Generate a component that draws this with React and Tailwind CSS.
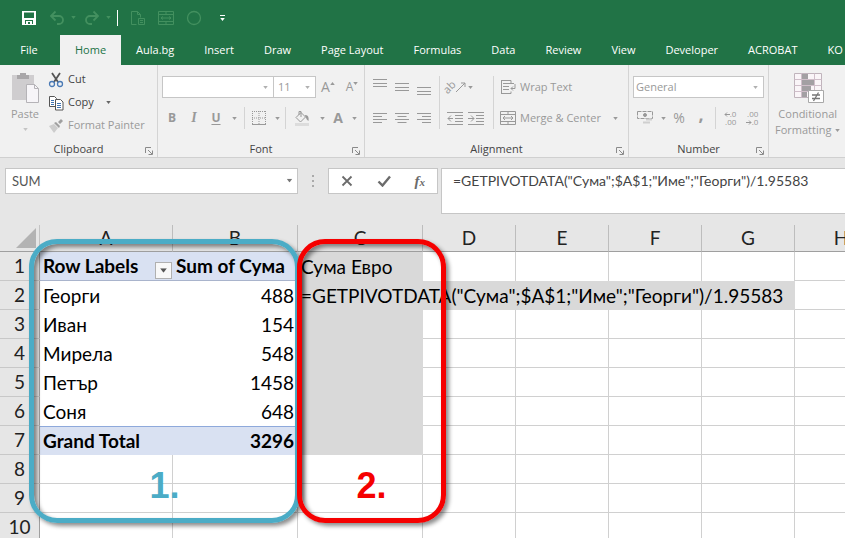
import { useState } from "react";

const TABS = [
  "Home",
  "Aula.bg",
  "Insert",
  "Draw",
  "Page Layout",
  "Formulas",
  "Data",
  "Review",
  "View",
  "Developer",
  "ACROBAT",
  "KO",
];

const COLUMNS = ["A", "B", "C", "D", "E", "F", "G", "H"];

const PIVOT_ROWS = [
  { name: "Георги", total: 488 },
  { name: "Иван", total: 154 },
  { name: "Мирела", total: 548 },
  { name: "Петър", total: 1458 },
  { name: "Соня", total: 648 },
];

const FORMULA = '=GETPIVOTDATA("Сума";$A$1;"Име";"Георги")/1.95583';

const Caret = ({ className = "" }) => (
  <svg
    viewBox="0 0 6 4"
    aria-hidden="true"
    className={`h-[3px] w-[5px] shrink-0 ${className}`}
  >
    <path d="M0 0h6L3 4z" fill="currentColor" />
  </svg>
);

const Icon = ({ size = "h-4 w-4", box = "0 0 16 16", children }) => (
  <svg
    viewBox={box}
    aria-hidden="true"
    fill="none"
    stroke="currentColor"
    className={`${size} shrink-0`}
  >
    {children}
  </svg>
);

const ToolButton = ({ label, className = "w-5", children }) => (
  <button
    type="button"
    aria-label={label}
    className={`flex h-[22px] items-center justify-center ${className}`}
  >
    {children}
  </button>
);

const Divider = () => <span className="mx-0.5 h-[22px] w-px bg-[#d4d4d4]" />;

const Group = ({ title, className = "", children }) => (
  <section
    aria-label={title}
    className={`relative flex shrink-0 flex-col justify-between border-r border-[#d4d4d4] ${className}`}
  >
    {children}
    <div className="text-center leading-4 text-[#444]">{title}</div>
    <button
      type="button"
      aria-label={`${title} settings`}
      className="absolute right-1 bottom-0.5 text-[#8a8a8a]"
    >
      <Icon size="h-2 w-2" box="0 0 8 8">
        <path d="M.5 6V.5H6M3 3l4 4M7.500 3.500v4h-4" />
      </Icon>
    </button>
  </section>
);

// Horizontal strokes used by the alignment buttons
const Lines = ({ d }) => (
  <Icon>
    <path d={d} />
  </Icon>
);

const TitleBar = () => (
  <div className="flex h-[35px] items-center pl-[21px] text-[#43905f]">
    <button type="button" aria-label="Save" className="text-white">
      <Icon size="h-4 w-4">
        <path d="M1 1h14v14H1z" fill="currentColor" stroke="none" />
        <path d="M3 2.500h10V8H3zM4 10h8v4H4z" fill="#217346" stroke="none" />
        <path d="M5 11h6v3H9v-2H7v2H5z" fill="currentColor" stroke="none" />
      </Icon>
    </button>
    <button type="button" aria-label="Undo" className="ml-3 flex items-center gap-1.5">
      <Icon size="h-4 w-4">
        <path d="M2 6h8a4 4 0 0 1 0 8H8M6.500 1.500 2 6l4.500 4.500" strokeWidth="1.8" />
      </Icon>
      <Caret />
    </button>
    <button type="button" aria-label="Redo" className="ml-2 flex items-center gap-1.5">
      <Icon size="h-4 w-4">
        <path d="M14 6H6a4 4 0 0 0 0 8h2M9.500 1.500 14 6l-4.500 4.500" strokeWidth="1.8" />
      </Icon>
      <Caret />
    </button>
    <span className="ml-1.5 h-4 w-px bg-white" />
    <button type="button" aria-label="Print preview" className="ml-3">
      <Icon>
        <path d="M6.500 14.500h-5v-13h6l3 3v3M7.500 1.500v3h3M8.500 8.500h6v6h-6zM10 10.500h3M10 12.500h3" />
      </Icon>
    </button>
    <button type="button" aria-label="Merge" className="ml-3">
      <Icon>
        <path d="M.5 1.500h15v13H.5zM.5 4.500h15M.5 11.500h15M3 8h10M5 6.500 3 8l2 1.500M11 6.500 13 8l-2 1.500M8 1.500v3M8 11.500v3" />
      </Icon>
    </button>
    <button type="button" aria-label="Oval" className="ml-3">
      <Icon>
        <circle cx="8" cy="8" r="6.500" strokeWidth="1.300" />
      </Icon>
    </button>
    <button
      type="button"
      aria-label="Customize toolbar"
      className="ml-[18px] flex flex-col items-center gap-0.5 text-white"
    >
      <span className="h-px w-[5px] bg-white" />
      <Caret />
    </button>
  </div>
);

const TabBar = ({ active, onSelect }) => (
  <nav className="flex h-[30px] text-white" aria-label="Ribbon tabs">
    <button type="button" className="w-[60px] shrink-0 pr-0.5 text-center">
      File
    </button>
    {TABS.map((tab) => (
      <button
        key={tab}
        type="button"
        onClick={() => onSelect(tab)}
        className={[
          "shrink-0 px-[15px] whitespace-nowrap",
          active === tab ? "bg-[#f1f1f1] text-[#217346]" : "",
        ].join(" ")}
      >
        {tab}
      </button>
    ))}
  </nav>
);

const ClipboardGroup = () => (
  <Group title="Clipboard" className="w-[158px]">
    <div className="flex pt-[3px] pl-2">
      <button
        type="button"
        className="flex w-[34px] flex-col items-center pt-1 text-[#9a9a9a]"
      >
        <Icon size="h-8 w-8" box="0 0 32 32">
          <path d="M3 3h22v25H3z" fill="#cfcdcf" stroke="none" />
          <path d="M8 3h3V1h6v2h3v4H8z" fill="#a9a7a9" stroke="none" />
          <path d="M17.500 12.500h8l4 4v14h-12z" fill="#f7f5f8" stroke="#b5b3b7" />
          <path d="M25.500 12.500v4h4" stroke="#b5b3b7" />
        </Icon>
        <span className="mt-0.5 leading-4">Paste</span>
        <Caret className="mt-1.5 text-[#c4c4c4]" />
      </button>
      <div className="flex flex-col pl-1.5 text-[#444]">
        <button type="button" className="flex h-[23px] items-center gap-1">
          <Icon>
            <path d="M4 1l6 9M12 1 6 10" stroke="#555" strokeWidth="1.800" />
            <circle cx="4" cy="12" r="2.500" stroke="#4a7ab5" strokeWidth="1.300" />
            <circle cx="12" cy="12" r="2.500" stroke="#4a7ab5" strokeWidth="1.300" />
          </Icon>
          Cut
        </button>
        <button type="button" className="flex h-[23px] items-center gap-1">
          <Icon>
            <path d="M1.500 1.500h5l2 2v8h-7z" fill="#fff" stroke="#555" />
            <path d="M3 5.500h3M3 7.500h3M3 9.500h3" stroke="#3f73b3" />
            <path d="M7.500 4.500h5l2.500 2.500v8H7.500z" fill="#fff" stroke="#555" />
            <path d="M9 8.500h4M9 10.500h4M9 12.500h4" stroke="#3f73b3" />
          </Icon>
          Copy
          <Caret className="ml-2 text-[#666]" />
        </button>
        <button
          type="button"
          className="flex h-[23px] items-center gap-1 whitespace-nowrap text-[#9a9a9a]"
        >
          <Icon>
            <path d="M1 8l5-2 4 4-4 5z" fill="#cdcdcd" stroke="none" />
            <path d="M6 5l2-1 4 4-1 2zM10 4l3-3 2 2-3 3z" fill="#a0a0a0" stroke="none" />
          </Icon>
          Format Painter
        </button>
      </div>
    </div>
  </Group>
);

const FontGroup = () => (
  <Group title="Font" className="w-[207px]">
    <div className="flex flex-col gap-[9px] pt-[11px] pl-1">
      <div className="flex h-[22px] items-center">
        <div className="relative">
          <select
            aria-label="Font name"
            className="h-[22px] w-28 appearance-none border border-[#c6c6c6] bg-white"
          />
          <Caret className="absolute top-[10px] right-1.5 text-[#b0b0b0]" />
        </div>
        <div className="relative -ml-px">
          <select
            aria-label="Font size"
            className="h-[22px] w-[43px] appearance-none border border-[#c6c6c6] bg-white px-1"
          >
            <option>11</option>
          </select>
          <Caret className="absolute top-[10px] right-1.5 text-[#b0b0b0]" />
        </div>
        <ToolButton label="Increase font size" className="w-6 text-sm">
          A<Caret className="mb-2 rotate-180" />
        </ToolButton>
        <ToolButton label="Decrease font size" className="w-6 text-xs">
          A<Caret className="mb-2" />
        </ToolButton>
      </div>
      <div className="flex items-center">
        <ToolButton label="Bold">
          <b className="text-xs">B</b>
        </ToolButton>
        <ToolButton label="Italic" className="w-6">
          <i className="font-['Liberation_Serif',serif] text-sm font-bold">I</i>
        </ToolButton>
        <ToolButton label="Underline">
          <b className="text-xs underline underline-offset-2">U</b>
        </ToolButton>
        <ToolButton label="Underline style" className="w-4">
          <Caret />
        </ToolButton>
        <Divider />
        <ToolButton label="Borders" className="w-6">
          <Icon>
            <path d="M1.500 1v13M14.500 1v13M8 1v13M1 1.500h14M1 8h14" strokeDasharray="1 1" />
            <path d="M1 14.500h14" />
          </Icon>
        </ToolButton>
        <ToolButton label="Border style" className="w-3">
          <Caret />
        </ToolButton>
        <Divider />
        <ToolButton label="Fill color" className="w-7">
          <Icon>
            <path d="M7 2.500 2 7.500l4.500 4.500 5-5zM5 5V1.500h2V7" fill="#f1f1f1" />
            <path d="M11 5c3 0 4 2 3.500 6-1.500-1-2-2-3-4z" fill="currentColor" stroke="none" />
            <path d="M1 13h14v3H1z" fill="#dcdcdc" stroke="none" />
          </Icon>
        </ToolButton>
        <ToolButton label="Fill palette" className="w-3">
          <Caret />
        </ToolButton>
        <ToolButton label="Font color">
          <b className="text-sm">A</b>
        </ToolButton>
        <ToolButton label="Font palette" className="w-3">
          <Caret />
        </ToolButton>
      </div>
    </div>
  </Group>
);

const AlignmentGroup = () => (
  <Group title="Alignment" className="w-[264px]">
    <div className="flex pt-[11px] pl-1">
      <div className="grid grid-cols-3 gap-y-[9px]">
        <ToolButton label="Top align" className="w-[22px]">
          <Lines d="M1 .5h14M1 4.500h14M1 7.500h14" />
        </ToolButton>
        <ToolButton label="Middle align" className="w-[22px]">
          <Lines d="M1 4.500h14M1 8.500h14M1 11.500h14" />
        </ToolButton>
        <ToolButton label="Bottom align" className="w-[22px]">
          <Lines d="M1 8.500h14M1 12.500h14M1 15.500h14" />
        </ToolButton>
        <ToolButton label="Align left" className="w-[22px]">
          <Lines d="M1 3.500h14M1 6.500h9M1 9.500h14M1 12.500h9" />
        </ToolButton>
        <ToolButton label="Center" className="w-[22px]">
          <Lines d="M1 3.500h14M3.500 6.500h9M1 9.500h14M3.500 12.500h9" />
        </ToolButton>
        <ToolButton label="Align right" className="w-[22px]">
          <Lines d="M1 3.500h14M6 6.500h9M1 9.500h14M6 12.500h9" />
        </ToolButton>
      </div>
      <div className="ml-1 grid w-[54px] grid-cols-2 gap-y-[9px] border-l border-[#d4d4d4] pr-2 pl-1">
        <ToolButton label="Orientation" className="w-[22px]">
          <span className="-rotate-45 text-[11px]">ab</span>
          <Icon size="h-3 w-3" box="0 0 12 12">
            <path d="M1 11 10 2M6 2h4v4" />
          </Icon>
        </ToolButton>
        <ToolButton label="Orientation menu" className="w-3">
          <Caret />
        </ToolButton>
        <ToolButton label="Decrease indent" className="w-[22px]">
          <Lines d="M0 2.500h16M8 5.500h8M8 8.500h8M8 11.500h8M0 14.500h16M1 8.500h5M4 5.500l-3 3 3 3" />
        </ToolButton>
        <ToolButton label="Increase indent" className="w-[22px]">
          <Lines d="M0 2.500h16M8 5.500h8M8 8.500h8M8 11.500h8M0 14.500h16M0 8.500h6M3 5.500l3 3-3 3" />
        </ToolButton>
      </div>
      <div className="flex flex-col gap-[9px] border-l border-[#d4d4d4] pl-1.5 whitespace-nowrap">
        <button type="button" className="flex h-[22px] items-center gap-1">
          <Icon>
            <path d="M1.500 1v14M1 1.500h10v3M1 14.500h10v-2M3 4.500h11M3 7.500h6M3 10.500h6M15 5v4.500h-4M13 7.500l-2 2 2 2" />
          </Icon>
          Wrap Text
        </button>
        <button type="button" className="flex h-[22px] items-center gap-1">
          <Icon>
            <path d="M.5 1.500h15v13H.5zM.5 4.500h15M.5 11.500h15M3 8h10M5 6 3 8l2 2M11 6l2 2-2 2M8 1.500v3M8 11.500v3" />
          </Icon>
          Merge &amp; Center
          <Caret className="ml-2" />
        </button>
      </div>
    </div>
  </Group>
);

const NumberGroup = () => (
  <Group title="Number" className="w-[140px]">
    <div className="flex flex-col gap-[9px] px-1 pt-[11px]">
      <div className="relative">
        <select
          aria-label="Number format"
          className="h-[22px] w-full appearance-none border border-[#c6c6c6] bg-white px-0.5"
        >
          <option>General</option>
        </select>
        <Caret className="absolute top-[10px] right-1.5 text-[#b0b0b0]" />
      </div>
      <div className="flex items-center">
        <ToolButton label="Accounting format" className="w-6">
          <Icon>
            <path d="M.5 1.500h15v7H.5z" strokeDasharray="4 1" />
            <circle cx="8" cy="5" r="1.500" fill="currentColor" />
            <path d="M9 8.500h6v2H9zM6 11.500h7v2H6z" fill="#cfcfcf" stroke="none" />
          </Icon>
        </ToolButton>
        <ToolButton label="Currency menu" className="w-3">
          <Caret />
        </ToolButton>
        <ToolButton label="Percent" className="w-5 text-sm">
          %
        </ToolButton>
        <ToolButton label="Comma style" className="w-6">
          <b className="pb-2 text-lg leading-4">,</b>
        </ToolButton>
        <Divider />
        <ToolButton label="Increase decimal" className="w-6">
          <span className="flex flex-col items-end text-[8px] leading-none">
            <span className="flex items-center">
              <Icon size="h-[5px] w-1.5" box="0 0 6 5">
                <path d="M6 2.500H1M3 .5l-2 2 2 2" />
              </Icon>
              .0
            </span>
            <span>.00</span>
          </span>
        </ToolButton>
        <ToolButton label="Decrease decimal" className="w-5">
          <span className="flex flex-col items-end text-[8px] leading-none">
            <span>.00</span>
            <span className="flex items-center">
              <Icon size="h-[5px] w-1.5" box="0 0 6 5">
                <path d="M0 2.500h5M3 .5l2 2-2 2" />
              </Icon>
              .0
            </span>
          </span>
        </ToolButton>
      </div>
    </div>
  </Group>
);

const StylesGroup = () => (
  <section aria-label="Styles" className="flex shrink-0 pt-[7px] pl-1.5">
    <button type="button" className="flex flex-col items-center whitespace-nowrap">
      <Icon size="h-8 w-8" box="0 0 32 32">
        <path d="M2.500 1.500h27v24h-27z" fill="#faf5f8" stroke="#c0b4bc" />
        <path d="M2.500 7.500h27M2.500 13.500h27M2.500 19.500h27M9.500 1.500v24M22.500 1.500v24" stroke="#d0bfca" />
        <path d="M10 2h6v5h-6zM10 8h12v5H10zM10 14h9v5h-9zM10 20h5v5h-5z" fill="#a3a0a3" stroke="none" />
        <path d="M16.500 18.500h15v12h-15z" fill="#fff" stroke="#a8a8a8" />
        <path d="M20 23h8M20 26.500h8M26.500 20.500 21.500 29" stroke="#777" strokeWidth="1.300" />
      </Icon>
      <span className="mt-0.5 leading-4">Conditional</span>
      <span className="flex items-center gap-1 leading-4">
        Formatting <Caret />
      </span>
    </button>
  </section>
);

const FormulaBar = ({ formula, onChange }) => (
  <div className="flex items-start pt-2.5 pb-[11px] pl-[5px] text-[#555]">
    <div className="relative">
      <input
        aria-label="Name box"
        defaultValue="SUM"
        className="block h-[26px] w-[293px] border border-[#c6c6c6] bg-white px-1.5 font-['Lato',sans-serif] text-[13px]"
      />
      <Caret className="absolute top-[11px] right-1.5 scale-125 text-[#777]" />
    </div>
    <div className="flex h-[26px] w-[30px] flex-col items-center justify-center gap-[3px]">
      <span className="h-0.5 w-0.5 bg-[#aaa]" />
      <span className="h-0.5 w-0.5 bg-[#aaa]" />
      <span className="h-0.5 w-0.5 bg-[#aaa]" />
    </div>
    <div className="flex h-[26px] w-[110px] shrink-0 items-center justify-around border border-[#c6c6c6] bg-white text-[#6b6b6b]">
      <button type="button" aria-label="Cancel">
        <Icon size="h-3 w-3" box="0 0 12 12">
          <path d="M1.500 1.500l9 9M10.500 1.500l-9 9" strokeWidth="1.800" />
        </Icon>
      </button>
      <button type="button" aria-label="Enter">
        <Icon size="h-3 w-3.5" box="0 0 14 12">
          <path d="M1.500 6.500l4 4L13 1.500" strokeWidth="2.400" />
        </Icon>
      </button>
      <button
        type="button"
        aria-label="Insert function"
        className="font-['Liberation_Serif',serif] text-[15px] leading-5 font-bold italic"
      >
        f<span className="text-[11px]">x</span>
      </button>
    </div>
    <textarea
      aria-label="Formula"
      value={formula}
      onChange={(e) => onChange(e.target.value)}
      className="ml-[3px] block h-[46px] min-w-0 flex-1 resize-none overflow-hidden border border-r-0 border-[#c6c6c6] bg-white px-[11px] py-[3px] font-['Lato',sans-serif] text-sm leading-[18px] whitespace-nowrap text-[#444]"
    />
  </div>
);

const RowHeader = ({ children }) => (
  <th
    scope="row"
    className="border-r border-b border-r-[#9f9f9f] border-b-[#c8c8c8] bg-[#e6e6e6] p-0 font-normal text-[#222]"
  >
    {children}
  </th>
);

const EmptyCells = ({ count }) =>
  Array.from({ length: count }, (_, i) => (
    <td key={i} className="border-r border-b border-[#d0d0d0]" />
  ));

const Callout = ({ className, children }) => (
  <div
    className={`pointer-events-none absolute top-3.5 flex h-[284px] items-end justify-center rounded-[28px] border-[5px] pb-3 font-['Liberation_Sans',sans-serif] text-4xl font-bold shadow-[3px_3px_4px_rgba(0,0,0,0.45),inset_3px_3px_4px_rgba(0,0,0,0.45)] ${className}`}
  >
    {children}
  </div>
);

const Sheet = ({ formula }) => (
  <div className="relative min-h-0 flex-1 overflow-hidden bg-white">
    <table className="w-full min-w-[888px] table-fixed border-separate border-spacing-0 font-['Lato',sans-serif] text-[19px] leading-7 text-black">
      <colgroup>
        <col className="w-10" />
        <col className="w-[133px]" />
        <col className="w-[125px]" />
        <col className="w-[125px]" />
        <col className="w-[93px]" />
        <col className="w-[93px]" />
        <col className="w-[93px]" />
        <col className="w-[93px]" />
        <col />
      </colgroup>
      <thead>
        <tr className="h-[27px] bg-[#e6e6e6] leading-[26px] text-[#222]">
          <td className="border-r border-b border-r-[#c4c4c4] border-b-[#9f9f9f] p-0">
            <svg viewBox="0 0 20 20" aria-hidden="true" className="mr-[3px] ml-auto h-5 w-5">
              <path d="M20 0v20H0z" fill="#b3b3b3" />
            </svg>
          </td>
          {COLUMNS.map((col) => (
            <th
              key={col}
              scope="col"
              className="border-r border-b border-r-[#bdbdbd] border-b-[#9f9f9f] p-0 font-normal"
            >
              {col}
            </th>
          ))}
        </tr>
      </thead>
      <tbody>
        <tr className="h-[29px]">
          <RowHeader>1</RowHeader>
          <td className="border-b border-[#a9b4cc] bg-[#d9e1f2] px-[3px] py-0 font-bold whitespace-nowrap">
            <div className="flex h-7 items-center justify-between">
              Row Labels
              <button
                type="button"
                aria-label="Filter row labels"
                className="-mr-0.5 mb-px flex h-[17px] w-[17px] items-center justify-center self-end border border-[#b0b0b0] bg-[#f8f8f8] text-[#555]"
              >
                <Caret className="scale-150" />
              </button>
            </div>
          </td>
          <td className="border-b border-[#a9b4cc] bg-[#d9e1f2] px-[3px] py-0 font-bold whitespace-nowrap">
            Sum of Сума
          </td>
          <td className="bg-[#d9d9d9] px-[3px] py-0">Сума Евро</td>
          <td className="border-r border-[#d0d0d0]" />
          <td className="border-r border-[#d0d0d0]" />
          <td className="border-r border-[#d0d0d0]" />
          <td className="border-r border-[#d0d0d0]" />
          <td className="border-b border-[#d0d0d0]" />
        </tr>
        {PIVOT_ROWS.map((row, i) => (
          <tr key={row.name} className="h-[29px]">
            <RowHeader>{i + 2}</RowHeader>
            <td className="px-[3px] py-0">{row.name}</td>
            <td className="px-1 py-0 text-right">{row.total}</td>
            {i === 0 ? (
              <>
                <td colSpan={5} className="bg-[#d9d9d9] px-[3px] py-0 whitespace-nowrap">
                  {formula}
                </td>
                <EmptyCells count={1} />
              </>
            ) : (
              <>
                <td className="bg-[#d9d9d9]" />
                <EmptyCells count={5} />
              </>
            )}
          </tr>
        ))}
        <tr className="h-[29px] font-bold">
          <RowHeader>7</RowHeader>
          <td className="border-t border-[#8ea9db] bg-[#d9e1f2] px-[3px] py-0">Grand Total</td>
          <td className="border-t border-[#8ea9db] bg-[#d9e1f2] px-1 py-0 text-right">
            3296
          </td>
          <td className="bg-[#d9d9d9]" />
          <EmptyCells count={5} />
        </tr>
        {[8, 9, 10].map((n) => (
          <tr key={n} className="h-[29px]">
            <RowHeader>{n}</RowHeader>
            <EmptyCells count={8} />
          </tr>
        ))}
      </tbody>
    </table>

    <Callout className="left-[29px] w-[271px] border-[#4bacc6] text-[#4bacc6]">1.</Callout>
    <Callout className="left-[297px] w-[149px] border-[#f50000] text-[#f50000]">2.</Callout>
  </div>
);

export default function App() {
  const [activeTab, setActiveTab] = useState("Home");
  const [formula, setFormula] = useState(FORMULA);

  return (
    <div className="flex h-screen flex-col overflow-hidden bg-[#e6e6e6] font-['Open_Sans',sans-serif] text-[11px]">
      <header className="shrink-0 overflow-hidden bg-[#217346]">
        <TitleBar />
        <TabBar active={activeTab} onSelect={setActiveTab} />
      </header>
      <div className="flex h-[93px] shrink-0 overflow-hidden border-b border-[#d0d0d0] bg-[#f1f1f1] text-[#999]">
        <ClipboardGroup />
        <FontGroup />
        <AlignmentGroup />
        <NumberGroup />
        <StylesGroup />
      </div>
      <FormulaBar formula={formula} onChange={setFormula} />
      <Sheet formula={formula} />
    </div>
  );
}
